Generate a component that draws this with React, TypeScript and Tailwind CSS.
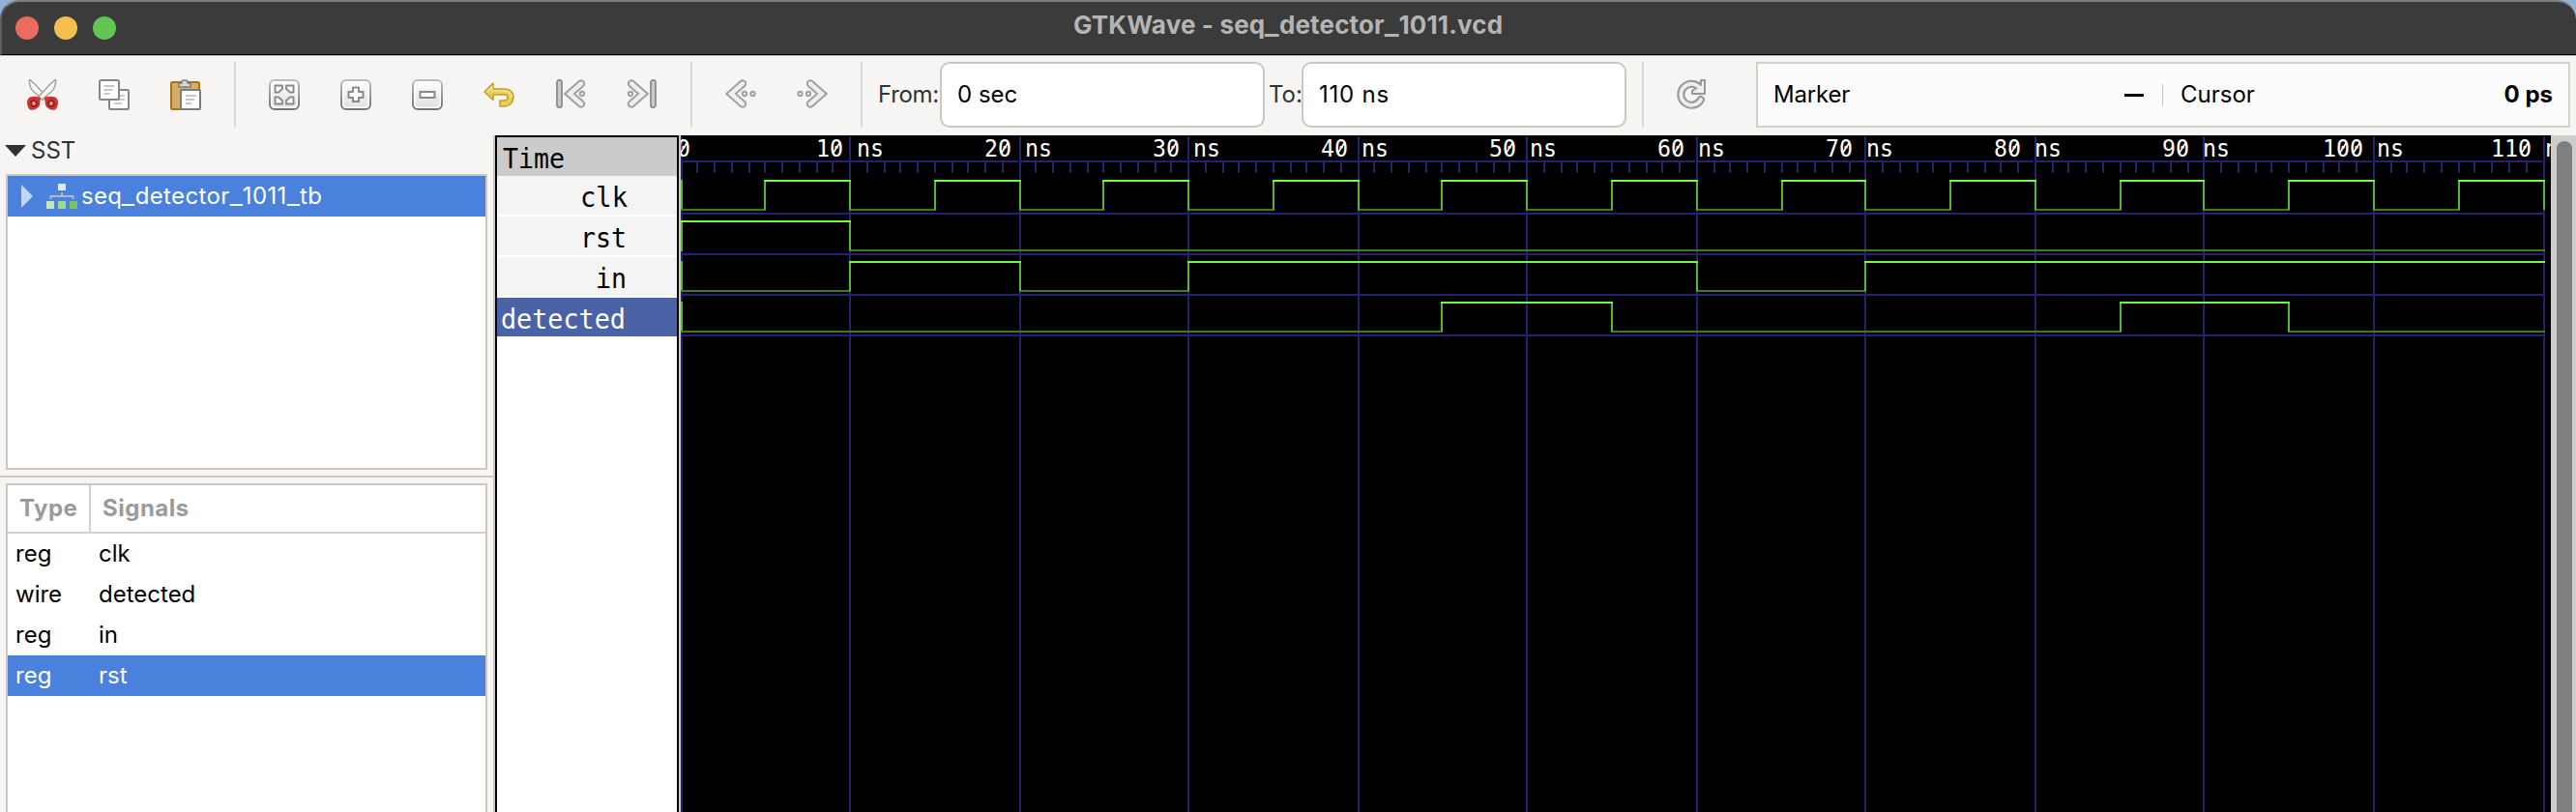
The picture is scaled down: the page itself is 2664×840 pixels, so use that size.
import React from "react";

const STEP = 8.7546;
const tx = (ns: number) => 2 * Math.floor(352 + ns * STEP) - 704;

const signals: { name: string; init: number; edges: number[] }[] = [
  { name: "clk", init: 0, edges: Array.from({ length: 22 }, (_, i) => (i + 1) * 5) },
  { name: "rst", init: 1, edges: [10] },
  { name: "in", init: 0, edges: [10, 20, 30, 60, 70] },
  { name: "detected", init: 0, edges: [45, 55, 85, 95] },
];

const NAVY = "#22226f";

function Trace({ top, init, edges }: { top: number; init: number; edges: number[] }) {
  const out: React.ReactNode[] = [];
  let level = init;
  let from = 0;
  const stops = edges[edges.length - 1] === 110 ? edges : [...edges, 110];
  stops.forEach((t, i) => {
    const end = tx(t);
    out.push(
      <rect key={"h" + i} x={from} y={level ? top : top + 30} width={end + 2 - from} height={2} fill={level ? "#70f84a" : "#3a7e21"} />,
    );
    from = end;
    level = 1 - level;
  });
  edges.forEach((t) => {
    out.push(<rect key={"v" + t} x={tx(t)} y={top + 2} width={2} height={29} fill="#54b835" />);
  });
  return (
    <g>
      <rect x={0} y={top} width={2} height={32} fill="#54b835" />
      {out}
    </g>
  );
}

const labels: [string, number, number, number][] = [
  ["10", 844, 872, 886], ["20", 1018, 1046, 1060], ["30", 1192, 1220, 1234],
  ["40", 1366, 1394, 1408], ["50", 1540, 1568, 1582], ["60", 1714, 1742, 1756],
  ["70", 1888, 1916, 1930], ["80", 2062, 2090, 2104], ["90", 2236, 2264, 2278],
  ["100", 2402, 2444, 2458], ["110", 2576, 2618, 2632],
];
const zeros = [3, ...labels.map((l) => l[2] - 711), 2444 - 725];

function Waves() {
  const tens = Array.from({ length: 12 }, (_, i) => i * 10);
  return (
    <svg width="1934" height="700" viewBox="0 0 1934 700" shapeRendering="crispEdges" className="block shrink-0 bg-black">
      {tens.map((t) => (
        <rect key={t} x={tx(t)} y={1} width={2} height={699} fill={NAVY} />
      ))}
      <rect x={2} y={26} width={1923} height={2} fill={NAVY} />
      {[20, 60, 80, 100].map((t) => (
        <rect key={t} x={tx(t) - 1} y={26} width={1} height={2} fill="#000" />
      ))}
      {Array.from({ length: 110 }, (_, i) => i).filter((i) => i % 10).map((i) => (
        <rect key={i} x={tx(i)} y={28} width={2} height={11} fill={NAVY} />
      ))}
      {signals.map((s, i) => (
        <g key={s.name}>
          <rect x={2} y={80 + i * 42} width={1924} height={2} fill={NAVY} />
          <Trace top={46 + i * 42} init={s.init} edges={s.edges} />
        </g>
      ))}
      <g fill="#fff" fontFamily="'DejaVu Sans Mono', monospace" fontSize="25.5">
        <text x={-4} y={22} textLength={14} lengthAdjust="spacingAndGlyphs">0</text>
        {labels.map(([n, a, b, u]) => (
          <React.Fragment key={n}>
            <text x={a - 704} y={22} textLength={b - a} lengthAdjust="spacingAndGlyphs">{n}</text>
            <text x={u - 704} y={22} textLength={28} lengthAdjust="spacingAndGlyphs">ns</text>
          </React.Fragment>
        ))}
      </g>
      {zeros.map((x) => (
        <line key={x} x1={x - 3.5} y1={18.5} x2={x + 3.5} y2={7.5} stroke="#fff" strokeWidth="1.7" shapeRendering="auto" />
      ))}
    </svg>
  );
}

function Names() {
  const rows: [string, number, number][] = [["clk", 600, 49], ["rst", 600, 48], ["in", 616, 32], ["detected", 518, 129]];
  return (
    <div className="flex h-[700px] w-[190px] shrink-0 flex-col border-2 border-b-0 border-black bg-white">
      <NameRow text="Time" x={6} w={64} cls="h-10 w-[186px] bg-[#cbcbcb]" fill="#000" />
      {rows.map(([t, x, w]) => (
        <NameRow
          key={t}
          text={t}
          x={x - 514}
          w={w}
          cls={t === "detected" ? "h-10 w-[186px] bg-[#4a63a6]" : "h-10 mb-0.5 w-[186px] bg-[#f4f4f4]"}
          fill={t === "detected" ? "#fff" : "#000"}
        />
      ))}
    </div>
  );
}

function NameRow({ text, x, w, cls, fill }: { text: string; x: number; w: number; cls: string; fill: string }) {
  return (
    <div className={cls}>
      <svg width="186" height="40" className="block">
        <text x={x} y={32} textLength={w} lengthAdjust="spacingAndGlyphs" fill={fill} fontFamily="'DejaVu Sans Mono', monospace" fontSize="29">{text}</text>
      </svg>
    </div>
  );
}

const Icon = ({ children, cls = "" }: { children: React.ReactNode; cls?: string }) => (
  <svg width="32" height="32" viewBox="0 0 32 32" fill="none" className={"block shrink-0 " + cls}>{children}</svg>
);

const Cut = () => (
  <Icon>
    <path d="M2.5 0 L9 6 L20 18 L16.5 21 L6 12 Q2 8 2.5 0Z" fill="#f6f6f4" stroke="#a3a5a1" strokeWidth="1.5" />
    <path d="M29.5 0 L23 6 L12 18 L15.5 21 L26 12 Q30 8 29.5 0Z" fill="#f6f6f4" stroke="#a3a5a1" strokeWidth="1.5" />
    <path d="M3 18.5 Q8 17 14 19 L13 27 Q9 33 3 31.5 Q0 29 0 24 Q0 20 3 18.5Z M29 18.5 Q24 17 18 19 L19 27 Q23 33 29 31.5 Q32 29 32 24 Q32 20 29 18.5Z" fill="#cb3531" />
    <circle cx="7" cy="25" r="2.8" fill="#e7a19c" stroke="#981e1b" strokeWidth="1.8" />
    <circle cx="25" cy="25" r="2.8" fill="#e7a19c" stroke="#981e1b" strokeWidth="1.8" />
  </Icon>
);
const Copy = () => (
  <Icon>
    <rect x="11" y="11" width="20" height="20" rx="1.5" fill="#fdfdfd" stroke="#858783" strokeWidth="2" />
    <path d="M20 17h7M20 21h7M16 25h8" stroke="#b9b9b9" strokeWidth="1.6" />
    <rect x="1" y="1" width="20" height="20" rx="1.5" fill="#fdfdfd" stroke="#858783" strokeWidth="2" />
    <path d="M5.5 7h11M5.5 11h9M5.5 15h6" stroke="#b4b4b4" strokeWidth="1.6" />
  </Icon>
);
const Paste = () => (
  <Icon>
    <rect x="1" y="3" width="29" height="28" rx="1.5" fill="#d6ac67" stroke="#a9731d" strokeWidth="2" />
    <path d="M9 8 V5.5 Q9 4 11 4 H12 V2 Q13 1 15 1 Q17 1 18 2 V4 H19 Q21 4 21 5.5 V8Z" fill="#d8d9d6" stroke="#7b7d79" strokeWidth="1.6" />
    <rect x="11" y="11" width="20" height="20" rx="1" fill="#fbfbfb" stroke="#7b7d79" strokeWidth="2" />
    <path d="M16 17h11M16 21h9M16 25h6" stroke="#b4b4b4" strokeWidth="1.6" />
  </Icon>
);
const Box = () => (
  <>
    <defs>
      <linearGradient id="btn" x1="0" y1="0" x2="0" y2="1">
        <stop offset="0" stopColor="#ffffff" />
        <stop offset="1" stopColor="#dededc" />
      </linearGradient>
      <linearGradient id="edge" x1="0" y1="0" x2="0" y2="1">
        <stop offset="0" stopColor="#bcbcba" />
        <stop offset="1" stopColor="#747572" />
      </linearGradient>
    </defs>
    <rect x="1" y="1" width="30" height="30" rx="5" fill="url(#btn)" stroke="url(#edge)" strokeWidth="2" />
    <rect x="2.7" y="2.7" width="26.6" height="26.6" rx="3.5" stroke="#fff" strokeWidth="1.4" />
  </>
);
const Fit = () => (
  <Icon>
    <Box />
    <path d="M6.5 6.5h7.5v3.5l-4 3.5h-3.5z M25.5 6.5h-7.5v3.5l4 3.5h3.5z M6.5 25.5h7.5v-3.5l-4 -3.5h-3.5z M25.5 25.5h-7.5v-3.5l4 -3.5h3.5z" fill="#fff" stroke="#8a8b88" strokeWidth="1.9" strokeLinejoin="round" />
  </Icon>
);
const Plus = () => (
  <Icon>
    <Box />
    <path d="M13 8.5h6v4.500h4.5v6H19v4h-6v-4H8.5v-6H13z" fill="#fff" stroke="#8a8b88" strokeWidth="2" strokeLinejoin="round" />
  </Icon>
);
const Minus = () => (
  <Icon>
    <Box />
    <rect x="8.5" y="13" width="15" height="6" fill="#fff" stroke="#8a8b88" strokeWidth="2" />
  </Icon>
);
const Undo = () => (
  <Icon>
    <path d="M1 13 L10 4 V10 H23 Q31 11 31 19 Q30 27 22 28 H17 V22 H21 Q25 22 25 19 Q25 16 22 16 H10 V21.5 Z" fill="#e5d05a" stroke="#c0a22a" strokeWidth="1.6" strokeLinejoin="round" />
    <path d="M3.5 13 L9 7.5 V12 H23 Q28 13 29 18" stroke="#f5eaa4" strokeWidth="1.2" />
  </Icon>
);
const Chev = ({ x }: { x: number }) => (
  <>
    <path d={`M${x + 18} 4.5 L${x + 6} 15 L${x + 18} 25.5`} stroke="#a0a19e" strokeWidth="8.4" strokeLinecap="round" strokeLinejoin="miter" />
    <path d={`M${x + 18} 4.5 L${x + 6} 15 L${x + 18} 25.5`} stroke="#eeeeec" strokeWidth="4.4" strokeLinecap="round" strokeLinejoin="miter" />
  </>
);
const Dot = ({ x }: { x: number }) => <circle cx={x} cy="15" r="2.2" fill="#ecebea" stroke="#a0a19e" strokeWidth="1.9" />;
const First = () => (
  <>
    <rect x="2" y="1" width="5" height="28" rx="2" fill="#c9cac8" stroke="#8d8e8b" strokeWidth="1.8" />
    <Chev x={9} />
    <Dot x={28} />
  </>
);
const Prev = () => (
  <>
    <Chev x={0} />
    <Dot x={20} />
    <Dot x={28.5} />
  </>
);
const Reload = () => (
  <Icon>
    <path d="M24 9 A11 11 0 1 0 25 21" stroke="#999a97" strokeWidth="8" strokeLinecap="round" />
    <path d="M16 15 H29 V1 H25 V6 L16 12Z" fill="#f0f0ee" stroke="#999a97" strokeWidth="2" strokeLinejoin="round" />
    <path d="M24 9 A11 11 0 1 0 25 21" stroke="#eeeeec" strokeWidth="3.8" strokeLinecap="round" />
  </Icon>
);
const Tree = () => (
  <svg width="32" height="28" viewBox="0 0 32 28" className="block shrink-0">
    <path d="M4.5 17 V14 H27.5 V17 M16 14 V10" stroke="#b3b9c4" strokeWidth="2" fill="none" />
    <rect x="12" y="1" width="8" height="7" fill="#dbe7fa" />
    <rect x="0" y="19" width="8" height="8" fill="#c4e6b8" />
    <rect x="12" y="19" width="8" height="8" fill="#a3d68f" />
    <rect x="24" y="19" width="8" height="8" fill="#7cc163" />
  </svg>
);

const Sep = ({ cls }: { cls: string }) => <div className={"h-[68px] w-0.5 shrink-0 bg-[#dad9d6] " + cls} />;
const U = () => <span className="mx-[1px] inline-block scale-x-[1.2]">_</span>;

export default function App() {
  return (
    <div className="h-[840px] w-[2664px] overflow-hidden bg-[#8fb4d6] font-['Inter',sans-serif] text-[24px] text-black">
      <div className="flex h-[57px] items-center rounded-tl-[20px] rounded-tr-[20px] border-t-2 border-b border-l-2 border-t-[#7b7b7b] border-b-black border-l-[#5c5c5c] bg-[#3b3b3b] pl-3.5">
        <div className="flex w-[1094px] shrink-0 gap-4">
          <span className="size-6 rounded-full bg-[#ed6a5e]" />
          <span className="size-6 rounded-full bg-[#f5bf4f]" />
          <span className="size-6 rounded-full bg-[#61c554]" />
        </div>
        <span className="pb-1.5 text-[26px] leading-8 font-bold tracking-[0.15px] whitespace-nowrap text-[#b4b4b4]">GTKWave - seq<U />detector<U />1011.vcd</span>
      </div>

      <div className="flex h-[83px] items-center border-t border-[#bdbcba] bg-[#f6f5f3] pb-0.5 pl-7">
        <Cut />
        <div className="ml-[42px]"><Copy /></div>
        <div className="ml-[42px]"><Paste /></div>
        <Sep cls="ml-[34px]" />
        <div className="ml-[34px] flex gap-[42px]">
          <Fit />
          <Plus />
          <Minus />
          <Undo />
          <Icon><First /></Icon>
          <Icon cls="-scale-x-100"><First /></Icon>
        </div>
        <Sep cls="ml-[34px]" />
        <div className="ml-[34px] flex gap-[42px]">
          <Icon><Prev /></Icon>
          <Icon cls="-scale-x-100"><Prev /></Icon>
        </div>
        <Sep cls="ml-[34px]" />
        <span className="ml-4 w-[64px] shrink-0 tracking-[-0.3px] whitespace-nowrap text-[#2e3436]">From:</span>
        <div className="flex h-[68px] w-[336px] shrink-0 items-center rounded-[10px] border-2 border-[#cdc7c2] bg-white pl-4">0 sec</div>
        <span className="ml-1 w-[34px] shrink-0 whitespace-nowrap text-[#2e3436]">To:</span>
        <div className="flex h-[68px] w-[336px] shrink-0 items-center rounded-[10px] border-2 border-[#cdc7c2] bg-white pl-4 tracking-[0.8px]">110 ns</div>
        <Sep cls="ml-4" />
        <div className="ml-[34px]"><Reload /></div>
        <div className="ml-[50px] flex h-[68px] w-[842px] shrink-0 items-center border-2 border-[#d2d1ca] bg-[#fcfcfc] px-4">
          <span className="w-[363px] tracking-[-0.2px]">Marker</span>
          <span className="h-[3px] w-5 bg-black" />
          <span className="ml-[19px] h-[22px] w-px bg-[#c4c4c4]" />
          <span className="ml-[18px]">Cursor</span>
          <span className="ml-auto font-bold">0 ps</span>
        </div>
      </div>

      <div className="flex h-[700px] bg-[#f6f5f3]">
        <div className="flex w-[510px] shrink-0 flex-col">
          <div className="flex h-10 shrink-0 items-center pb-[9px] pl-[5px] text-[#2e3436]">
            <svg width="22" height="12" className="block"><path d="M0 0H22L11 12Z" fill="#2e3436" /></svg>
            <span className="ml-[5px]">SST</span>
          </div>
          <div className="ml-1.5 h-[306px] w-[498px] shrink-0 border-2 border-[#cdc7c2] bg-white">
            <div className="flex h-[42px] items-center bg-[#4a81dc] pl-3.5 text-white">
              <svg width="12" height="24" className="block"><path d="M0 0V24L12 12Z" fill="#c3d5f4" /></svg>
              <div className="ml-3.5"><Tree /></div>
              <span className="ml-1 tracking-[0.35px]">seq<U />detector<U />1011<U />tb</span>
            </div>
          </div>
          <div className="mt-1.5 h-0.5 shrink-0 bg-[#cdc7c2]" />
          <div className="mt-1.5 ml-1.5 h-[340px] w-[498px] shrink-0 border-2 border-b-0 border-[#cdc7c2] bg-white">
            <div className="flex h-[50px] border-b-2 border-[#d5d0cc] pt-0 font-bold tracking-[0.5px] text-[#999b9c]">
              <div className="flex w-[86px] items-center border-r-2 border-[#d5d0cc] pl-3">Type</div>
              <div className="flex items-center pl-3">Signals</div>
            </div>
            {[["reg", "clk"], ["wire", "detected"], ["reg", "in"], ["reg", "rst"]].map(([a, b]) => (
              <div key={b} className={b === "rst" ? "flex h-[42px] items-center bg-[#4a81dc] pl-2 text-white" : "flex h-[42px] items-center pl-2"}>
                <span className="w-[86px]">{a}</span>
                <span>{b}</span>
              </div>
            ))}
          </div>
        </div>
        <div className="w-0.5 shrink-0 bg-[#cdc7c2]" />
        <Names />
        <div className="w-0.5 shrink-0 bg-[#cdc7c2]" />
        <Waves />
        <div className="flex w-[26px] shrink-0 bg-[#cdcdcd] pt-1.5 pl-1.5">
          <div className="h-[694px] w-4 rounded-t-full bg-[#7e7f81]" />
        </div>
      </div>
    </div>
  );
}
